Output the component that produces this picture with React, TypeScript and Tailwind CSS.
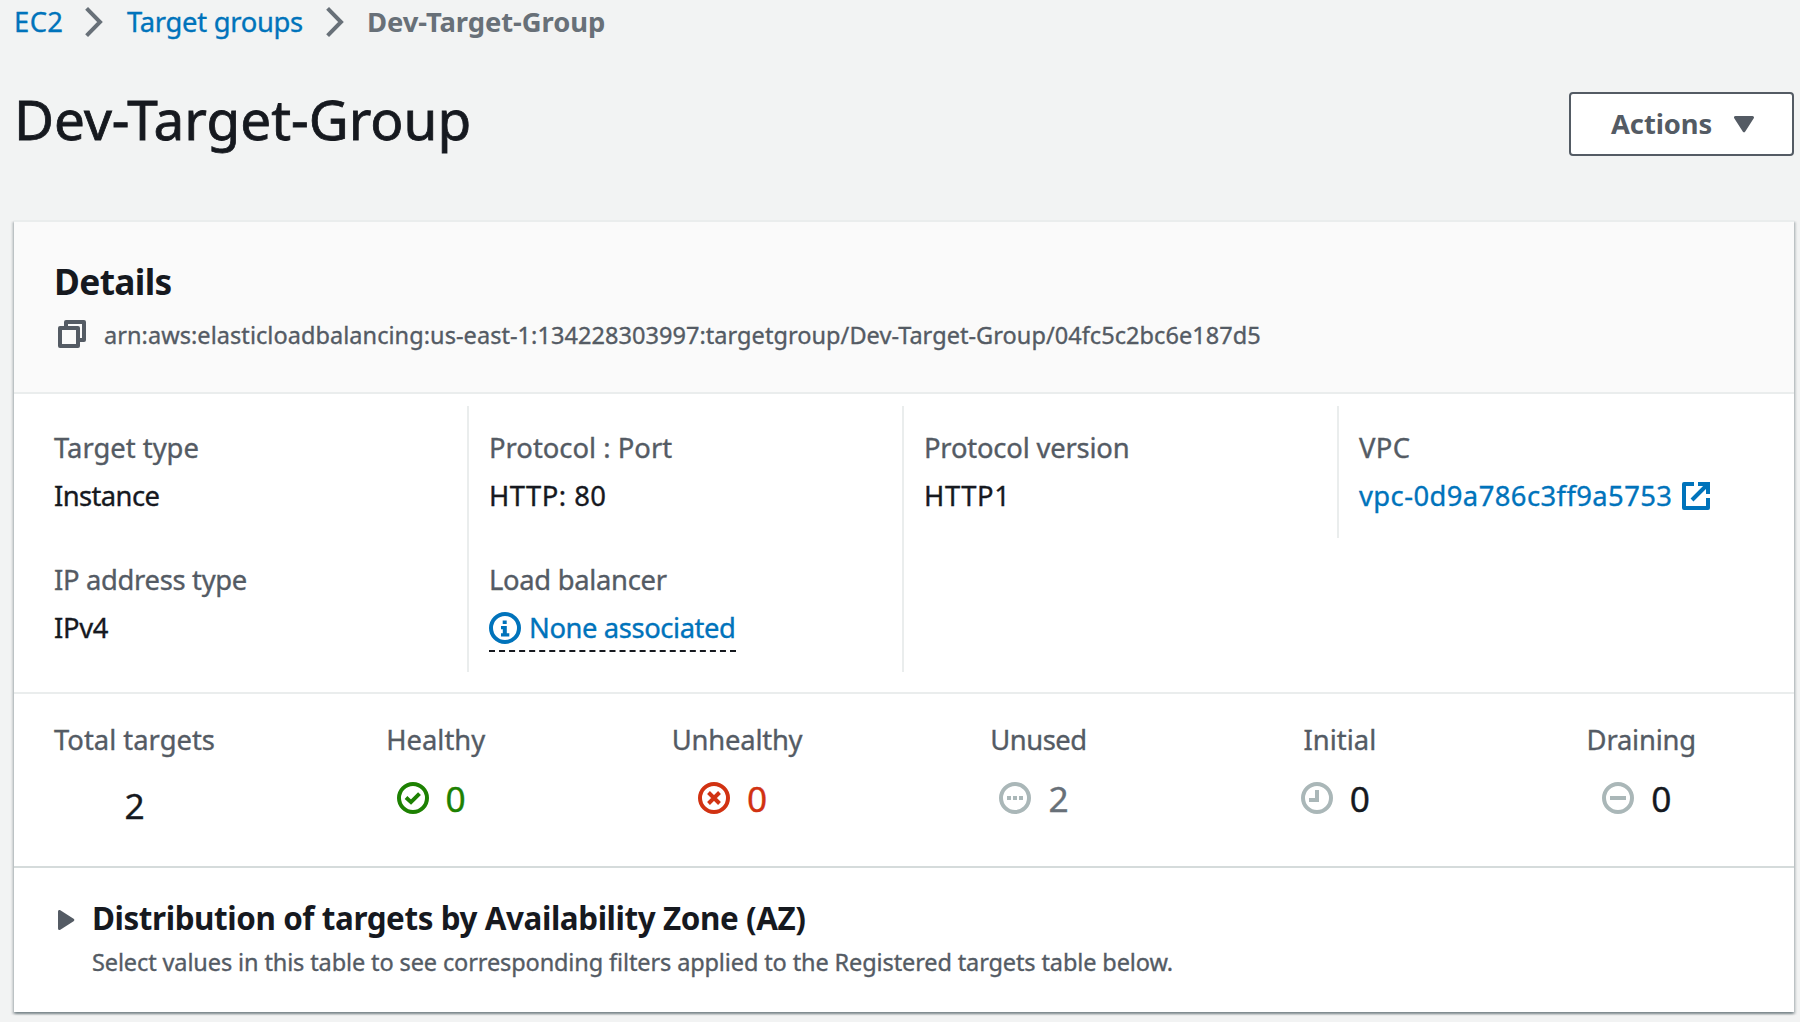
import React, { ReactNode } from 'react';

function Chevron({ className }: { className?: string }) {
  return (
    <svg width="18" height="30" viewBox="0 0 18 30" className={className}>
      <path d="M1.6 1.4 15 15 1.6 28.6" fill="none" stroke="#687078" strokeWidth="4" />
    </svg>
  );
}

function CopyIcon() {
  return (
    <svg width="28" height="28" viewBox="0 0 28 28" fill="none" stroke="#545b64" strokeWidth="4" strokeLinejoin="round">
      <path d="M8 6V2h18v18h-4" />
      <path d="M2 8h18v18H2z" />
    </svg>
  );
}

function ExternalIcon() {
  return (
    <svg width="28" height="28" viewBox="0 0 28 28" fill="none" stroke="#0073bb" strokeWidth="4">
      <path d="M12 2H2v24h24V16" strokeLinejoin="round" />
      <path d="M16 2h10v10" />
      <path d="M10 18 25 3" />
    </svg>
  );
}

function Ring({ color, children, className }: { color: string; children: ReactNode; className?: string }) {
  return (
    <svg width="32" height="32" viewBox="0 0 32 32" fill="none" stroke={color} strokeWidth="4" className={className}>
      <circle cx="16" cy="16" r="14" />
      {children}
    </svg>
  );
}

function Field({ label, children, last }: { label: ReactNode; children: ReactNode; last?: boolean }) {
  return (
    <div className={last ? 'h-[134px] pt-[18px]' : 'h-[132px] pt-[18px]'}>
      <div className="h-12 leading-[48px] text-[#545b64]">{label}</div>
      <div className="flex h-12 leading-[48px]">{children}</div>
    </div>
  );
}

function Stat({ label, value, icon, valueClass }: { label: ReactNode; value: string; icon: ReactNode; valueClass: string }) {
  return (
    <div className="flex flex-col items-center">
      <div className="h-10 leading-10 text-[#545b64]">{label}</div>
      <div className="mt-[16px] flex h-[44px] items-center pr-[9px]">
        {icon}
        <span className={`ml-[17px] text-[35.3px] leading-[42px] ${valueClass}`}>{value}</span>
      </div>
    </div>
  );
}

export default function App() {
  return (
    <div className="h-[1022px] w-[1800px] overflow-hidden bg-[#f2f3f3] font-['Noto_Sans',sans-serif] text-[27.4px] whitespace-nowrap text-[#16191f] [-webkit-text-stroke:0.35px]">
      <nav className="flex h-[44px] items-center pl-[14px] leading-[43px]">
        <a className="-mt-[2px] w-[71px] tracking-[0.4px] text-[#0073bb]">EC2</a>
        <Chevron />
        <a className="-mt-[2px] ml-[24px] w-[199px] tracking-[-0.3px] text-[#0073bb]">Target groups</a>
        <Chevron />
        <span className="-mt-[2px] ml-[23px] font-bold tracking-[-0.06px] text-[#687078] [-webkit-text-stroke:0]">Dev-Target-Group</span>
      </nav>

      <header className="mt-[48px] flex h-16 items-start justify-between pr-[6px] pl-[14px]">
        <h1 className="text-[54.9px] leading-[54px] tracking-[0.02px] [-webkit-text-stroke:0.8px]">Dev-Target-Group</h1>
        <button className="flex h-16 w-[225px] items-center rounded-[4px] border-2 border-[#545b64] bg-white pl-[40px] font-bold text-[#545b64] [-webkit-text-stroke:0]">
          <span className="leading-[58px] tracking-[-0.1px]">Actions</span>
          <svg width="20" height="17" viewBox="0 0 20 17" className="ml-[22px]">
            <path d="M1.5 1.5h17L10 14.8z" fill="#545b64" stroke="#545b64" strokeWidth="3" strokeLinejoin="round" />
          </svg>
        </button>
      </header>

      <main className="mt-[64px] ml-[14px] h-[792px] w-[1780px] border-t-2 border-[#eaeded] bg-white shadow-[0_2px_2px_0_rgba(0,28,36,0.3),2px_2px_2px_0_rgba(0,28,36,0.15),-2px_2px_2px_0_rgba(0,28,36,0.15)]">
        <section className="h-[172px] border-b-2 border-[#eaeded] bg-[#fafafa] pt-[37px] pl-[40px]">
          <h2 className="text-[35.3px] leading-[44px] font-bold tracking-[-0.64px] [-webkit-text-stroke:0]">Details</h2>
          <div className="mt-[14px] flex h-[36px] items-center pl-1">
            <span className="-mt-[2px]"><CopyIcon /></span>
            <span className="ml-[18px] text-[23.5px] leading-[36px] tracking-[0.056px] text-[#545b64]">
              arn:aws:elasticloadbalancing:us-east-1:134228303997:targetgroup/Dev-Target-Group/04fc5c2bc6e187d5
            </span>
          </div>
        </section>

        <section className="flex h-[300px] items-start border-b-2 border-[#eaeded] pt-[12px]">
          <div className="w-[453px] pl-[40px]">
            <Field label="Target type"><span className="tracking-[-0.6px]">Instance</span></Field>
            <Field label={<span className="tracking-[-0.32px]">IP address type</span>} last>
              <span className="tracking-[-0.3px]">IPv4</span>
            </Field>
          </div>
          <div className="w-[435px] border-l-2 border-[#eaeded] pl-[20px]">
            <Field label="Protocol : Port"><span className="tracking-[0.47px]">HTTP: 80</span></Field>
            <Field label={<span className="tracking-[-0.31px]">Load balancer</span>} last>
              <a className="mt-px flex h-[47px] items-center border-b-2 border-dashed border-[#16191f] text-[#0073bb]">
                <Ring color="#0073bb">
                  <path d="M13.7 8.5h4v3.400h-4zM12 14h5.800v7.200h2.500V24.500H12v-3.300h1.800v-4H12z" fill="#0073bb" stroke="none" />
                </Ring>
                <span className="ml-[8px] tracking-[-0.42px]">None associated</span>
              </a>
            </Field>
          </div>
          <div className="h-[266px] w-[435px] border-l-2 border-[#eaeded] pl-[20px]">
            <Field label={<span className="tracking-[-0.2px]">Protocol version</span>}>
              <span className="tracking-[0.6px]">HTTP1</span>
            </Field>
          </div>
          <div className="w-[435px] border-l-2 border-[#eaeded] pl-[20px]">
            <Field label={<span className="tracking-[0.4px]">VPC</span>}>
              <a className="flex items-center text-[#0073bb]">
                <span className="w-[323px] tracking-[0.42px]">vpc-0d9a786c3ff9a5753</span>
                <ExternalIcon />
              </a>
            </Field>
          </div>
        </section>

        <section className="flex h-[174px] border-b-2 border-[#d5dbdb] pt-[26px] pl-[40px]">
          <div className="flex w-[161px] flex-col items-center">
            <div className="h-10 leading-10 text-[#545b64]">Total targets</div>
            <div className="mt-[23px] text-[35.3px] leading-[44px]">2</div>
          </div>
          <div className="ml-[70px] grid w-[1507px] grid-cols-5">
            <Stat
              label="Healthy"
              value="0"
              valueClass="text-[#1d8102]"
              icon={<Ring color="#1d8102"><path d="m9 15.500 5 4.600 8.500-8.500" /></Ring>}
            />
            <Stat
              label={<span className="tracking-[-0.22px]">Unhealthy</span>}
              value="0"
              valueClass="text-[#d13212]"
              icon={<Ring color="#d13212"><path d="m10.500 10.500 11 11m0-11-11 11" /></Ring>}
            />
            <Stat
              label={<span className="tracking-[-0.5px]">Unused</span>}
              value="2"
              valueClass="text-[#687078]"
              icon={<Ring color="#aab7b8"><path d="M8 16h4m2 0h4m2 0h4" /></Ring>}
            />
            <Stat
              label="Initial"
              value="0"
              valueClass="text-[#16191f]"
              icon={<Ring color="#aab7b8"><path d="M16 8v10H8" /></Ring>}
            />
            <Stat
              label={<span className="tracking-[-0.2px]">Draining</span>}
              value="0"
              valueClass="text-[#16191f]"
              icon={<Ring color="#aab7b8"><path d="M8 16h16" /></Ring>}
            />
          </div>
        </section>

        <section className="flex pt-[28px] pl-[44px]">
          <svg width="17" height="20" viewBox="0 0 17 20" className="mt-[14px]">
            <path d="M1.500 1.500v17L14.800 10z" fill="#545b64" stroke="#545b64" strokeWidth="3" strokeLinejoin="round" />
          </svg>
          <div className="ml-[17px]">
            <h3 className="text-[31.4px] leading-[44px] font-bold tracking-[-0.42px] [-webkit-text-stroke:0]">
              Distribution of targets by Availability Zone (AZ)
            </h3>
            <p className="mt-[4px] text-[23.5px] leading-[36px] tracking-[-0.117px] text-[#545b64]">
              Select values in this table to see corresponding filters applied to the Registered targets table below.
            </p>
          </div>
        </section>
      </main>
    </div>
  );
}
